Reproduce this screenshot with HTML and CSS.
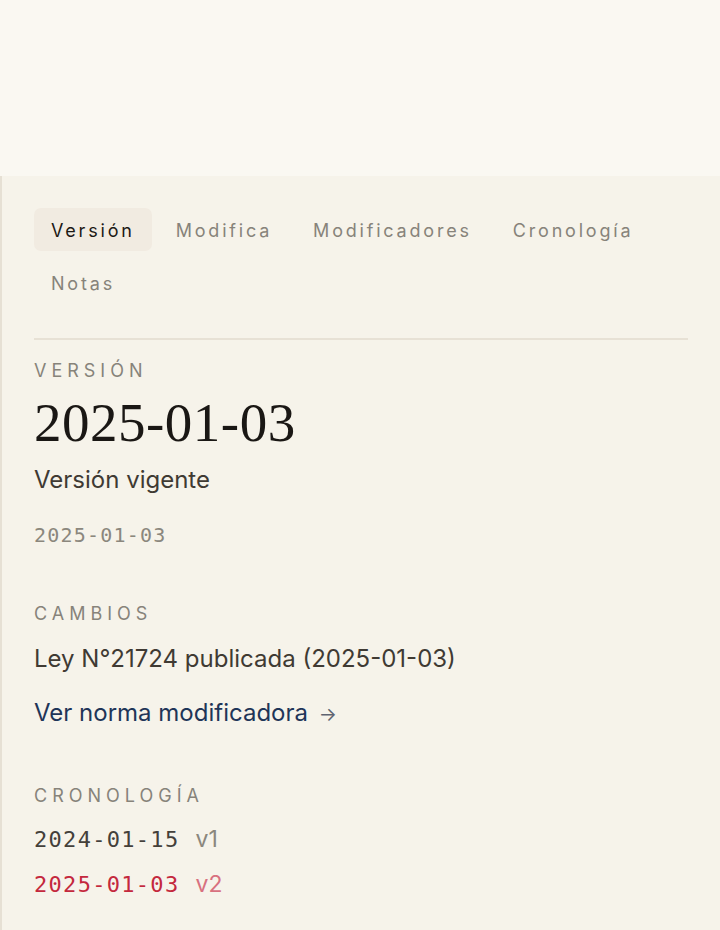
FILE: index.html
```html
<!DOCTYPE html>
<html lang="es">
<head>
<meta charset="utf-8">
<meta name="viewport" content="width=device-width, initial-scale=1">
<title>Versión 2025-01-03</title>
<link rel="stylesheet" href="styles.css">
</head>
<body>
<div class="top"></div>
<aside class="panel">
	<nav class="tabs">
		<a class="tab active" href="#">Versión</a>
		<a class="tab" href="#">Modifica</a>
		<a class="tab" href="#">Modificadores</a>
		<a class="tab" href="#">Cronología</a>
		<a class="tab" href="#">Notas</a>
	</nav>

	<section class="block first">
		<p class="label">Versión</p>
		<h1 class="date-big">2025-01-03</h1>
		<p class="text">Versión vigente</p>
		<p class="mono muted">2025-01-03</p>
	</section>

	<section class="block">
		<p class="label">Cambios</p>
		<p class="text">Ley N°21724 publicada (2025-01-03)</p>
		<a class="link" href="#">Ver norma modificadora <span class="arrow">→</span></a>
	</section>

	<section class="block last">
		<p class="label">Cronología</p>
		<ul class="timeline">
			<li><span class="mono">2024-01-15</span> <span class="ver">v1</span></li>
			<li class="current"><span class="mono">2025-01-03</span> <span class="ver">v2</span></li>
		</ul>
	</section>
</aside>
</body>
</html>
```

FILE: styles.css
```css
body {
  margin: 0;
  background: #faf8f2;
  font-family: Inter, "Noto Sans", sans-serif;
  color: #3f3a33;
}

p, h1, ul {
  margin: 0;
  padding: 0;
}

.top {
  height: 176px;
}

.panel {
  background: #f6f3ea;
  border-left: 2px solid #e6e0d4;
  padding: 32px 32px 40px 32px;
  min-height: 700px;
}

.tabs {
  display: flex;
  flex-wrap: wrap;
  gap: 10px 7px;
  padding-bottom: 34px;
  border-bottom: 2px solid #e7e1d5;
}

.tab {
  padding: 12px 17px 10px;
  font-size: 18px;
  line-height: 21px;
  letter-spacing: 2.8px;
  color: #87837a;
  text-decoration: none;
  border-radius: 7px;
}

.tab.active {
  background: #f1ebe1;
  color: #1c1915;
}

.block {
  padding-top: 56px;
}

.block.first {
  padding-top: 20px;
}

.block.last {
  padding-top: 54px;
}

.label {
  font-size: 18px;
  line-height: 22px;
  letter-spacing: 5px;
  text-transform: uppercase;
  color: #87837a;
}

.date-big {
  font-family: "Liberation Serif", "DejaVu Serif", serif;
  font-weight: normal;
  font-size: 55px;
  line-height: 62px;
  letter-spacing: 0.5px;
  color: #1a1714;
  margin-top: 10px;
}

.text {
  font-size: 24px;
  line-height: 32px;
  margin-top: 10px;
}

.block .label + .text {
  margin-top: 18px;
}

.mono {
  font-family: "DejaVu Sans Mono", "Liberation Mono", monospace;
  font-size: 20px;
  letter-spacing: 1.2px;
}

.muted {
  color: #8b877d;
  margin-top: 27px;
  line-height: 24px;
}

.link {
  display: block;
  width: fit-content;
  margin-top: 22px;
  font-size: 24px;
  line-height: 32px;
  color: #1f3558;
  text-decoration: none;
}

.arrow {
  font-size: 19px;
  margin-left: 4px;
  color: #5f6470;
}

.timeline {
  list-style: none;
  margin-top: 10px;
}

.timeline li {
  display: flex;
  align-items: baseline;
  gap: 16px;
  line-height: 44px;
  color: #44403a;
}

.timeline .mono {
  font-size: 22px;
  letter-spacing: 1.3px;
}

.ver {
  font-size: 23px;
  color: #8b877d;
}

.timeline .current {
  color: #c4283d;
}

.timeline .current .ver {
  color: #d8717f;
}
```
